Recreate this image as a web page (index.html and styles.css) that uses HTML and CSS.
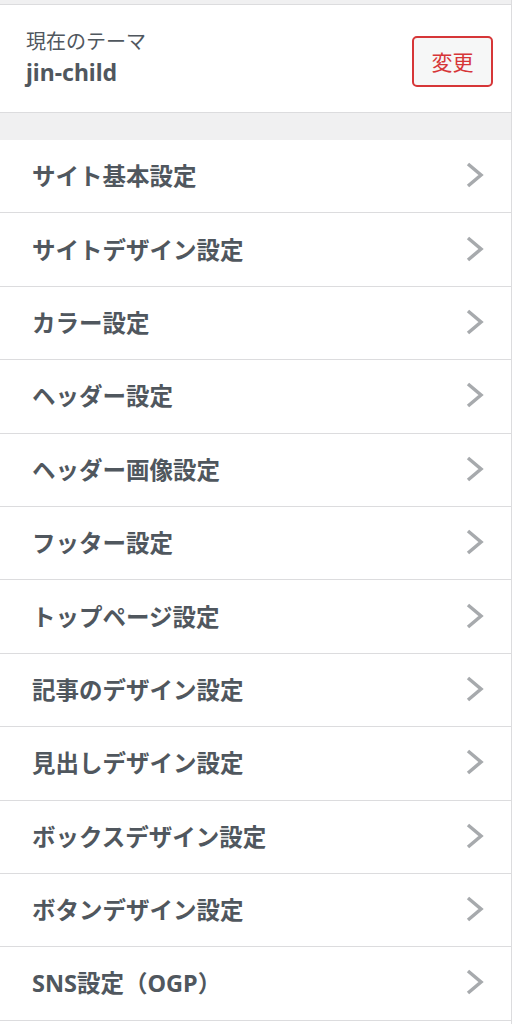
FILE: index.html
```html
<!DOCTYPE html>
<html lang="ja">
  <head>
    <meta charset="UTF-8" />
    <meta name="viewport" content="width=device-width, initial-scale=1.0" />
    <title>カスタマイズ</title>
    <link rel="stylesheet" href="styles.css">
  </head>
  <body>
    <div class="customize-sidebar">
      <div class="theme-info">
        <div class="theme-text">
          <div class="theme-label">現在のテーマ</div>
          <div class="theme-name">jin-child</div>
        </div>
        <button class="change-btn">変更</button>
      </div>

      <ul class="section-list">
        <li class="section-item"><span>サイト基本設定</span><svg class="chevron" width="18" height="26" viewBox="0 0 18 26"><polyline points="2,2 15,13 2,24" /></svg></li>
        <li class="section-item"><span>サイトデザイン設定</span><svg class="chevron" width="18" height="26" viewBox="0 0 18 26"><polyline points="2,2 15,13 2,24" /></svg></li>
        <li class="section-item"><span>カラー設定</span><svg class="chevron" width="18" height="26" viewBox="0 0 18 26"><polyline points="2,2 15,13 2,24" /></svg></li>
        <li class="section-item"><span>ヘッダー設定</span><svg class="chevron" width="18" height="26" viewBox="0 0 18 26"><polyline points="2,2 15,13 2,24" /></svg></li>
        <li class="section-item"><span>ヘッダー画像設定</span><svg class="chevron" width="18" height="26" viewBox="0 0 18 26"><polyline points="2,2 15,13 2,24" /></svg></li>
        <li class="section-item"><span>フッター設定</span><svg class="chevron" width="18" height="26" viewBox="0 0 18 26"><polyline points="2,2 15,13 2,24" /></svg></li>
        <li class="section-item"><span>トップページ設定</span><svg class="chevron" width="18" height="26" viewBox="0 0 18 26"><polyline points="2,2 15,13 2,24" /></svg></li>
        <li class="section-item"><span>記事のデザイン設定</span><svg class="chevron" width="18" height="26" viewBox="0 0 18 26"><polyline points="2,2 15,13 2,24" /></svg></li>
        <li class="section-item"><span>見出しデザイン設定</span><svg class="chevron" width="18" height="26" viewBox="0 0 18 26"><polyline points="2,2 15,13 2,24" /></svg></li>
        <li class="section-item"><span>ボックスデザイン設定</span><svg class="chevron" width="18" height="26" viewBox="0 0 18 26"><polyline points="2,2 15,13 2,24" /></svg></li>
        <li class="section-item"><span>ボタンデザイン設定</span><svg class="chevron" width="18" height="26" viewBox="0 0 18 26"><polyline points="2,2 15,13 2,24" /></svg></li>
        <li class="section-item"><span>SNS設定（OGP）</span><svg class="chevron" width="18" height="26" viewBox="0 0 18 26"><polyline points="2,2 15,13 2,24" /></svg></li>
      </ul>
    </div>
  </body>
</html>
```

FILE: styles.css
```css
/* Reset CSS */
* {
  margin: 0;
  padding: 0;
  box-sizing: border-box;
}

body {
  font-family: "Noto Sans", "Noto Sans CJK JP", sans-serif;
  background: #f0f0f1;
  color: #50575e;
  width: 512px;
  height: 1024px;
  overflow: hidden;
}

.customize-sidebar {
  display: flex;
  flex-direction: column;
  width: 512px;
  height: 1024px;
  padding-top: 4px;
  border-right: 1px solid #dcdcde;
}

.theme-info {
  display: flex;
  align-items: center;
  justify-content: space-between;
  height: 109px;
  padding: 0 18px 4px 26px;
  background: #fff;
  border-top: 1px solid #dcdcde;
  border-bottom: 1px solid #dcdcde;
}

.theme-label {
  font-size: 20px;
  line-height: 30px;
}

.theme-name {
  font-size: 23px;
  font-weight: 700;
  line-height: 30px;
}

.change-btn {
  width: 81px;
  height: 51px;
  margin-top: 9px;
  font-family: inherit;
  font-size: 21px;
  color: #d63638;
  background: #f6f7f7;
  border: 2px solid #d63638;
  border-radius: 5px;
  cursor: pointer;
}

.section-list {
  flex: 1;
  list-style: none;
  margin-top: 27px;
  background: #fff;
}

.section-item {
  display: flex;
  align-items: center;
  justify-content: space-between;
  height: 73.4px;
  padding: 0 27px 2px 32px;
  font-size: 23.5px;
  font-weight: 700;
  border-bottom: 1px solid #dcdcde;
  cursor: pointer;
}

.chevron {
  fill: none;
  stroke: #a7aaad;
  stroke-width: 3.5;
}
```
